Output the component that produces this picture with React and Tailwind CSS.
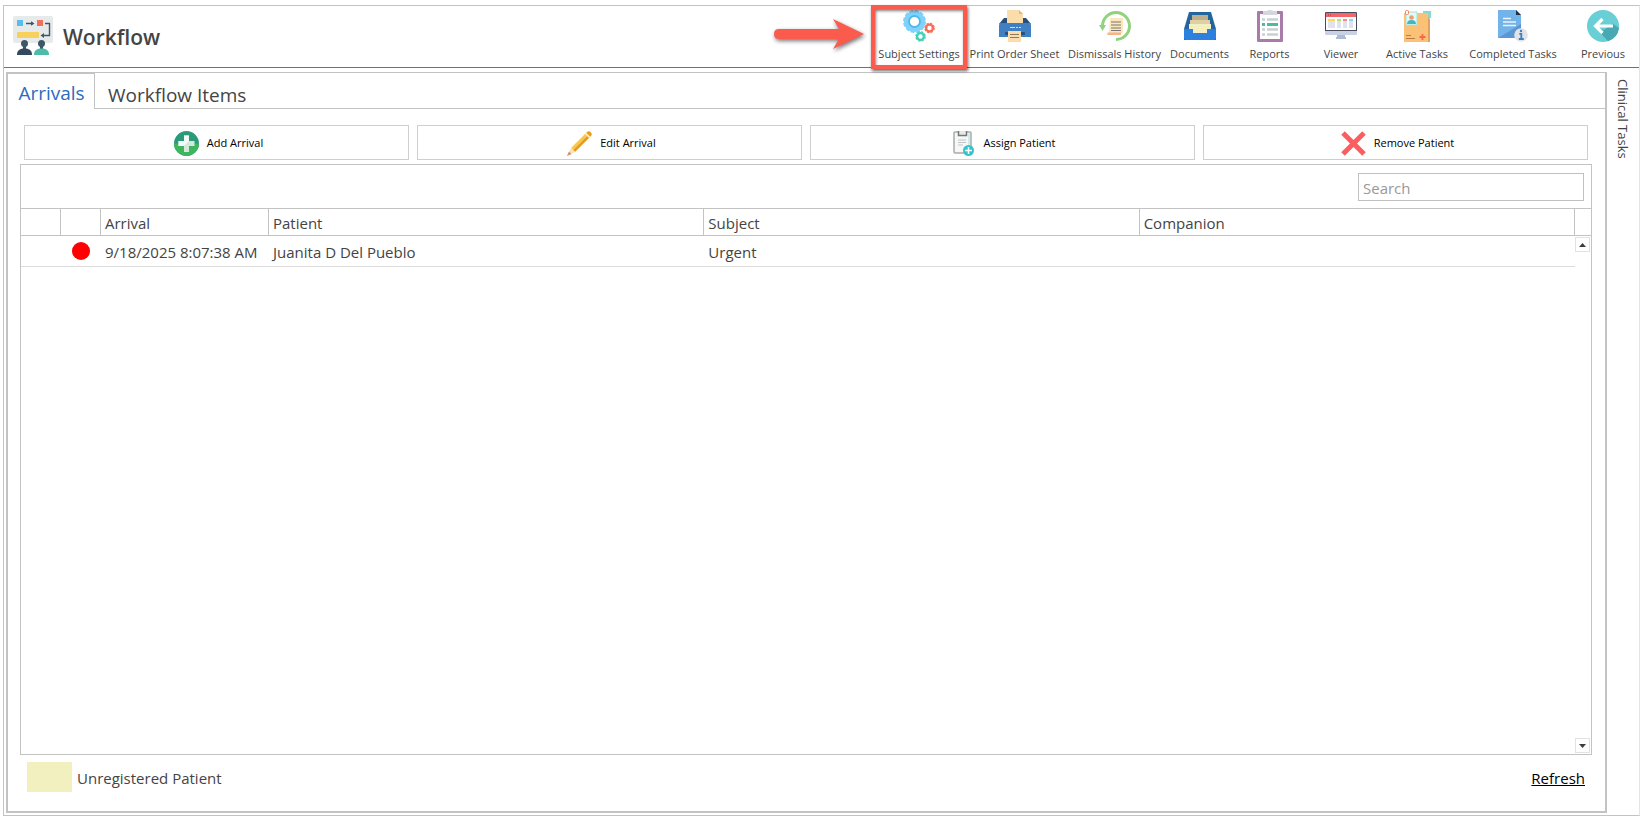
import clsx from 'clsx'

function WorkflowIcon() {
  return (
    <svg width="40" height="40" viewBox="0 0 40 40" aria-hidden="true">
      <rect width="40" height="27" rx="2" fill="#e7eaea" />
      <rect x="4" y="4" width="6" height="6" fill="#56bdee" />
      <rect x="24" y="4" width="6" height="6" fill="#f2705a" />
      <rect x="4" y="16" width="22" height="6" fill="#f8d15c" />
      <path d="M13 7.500h7M32 7.500h4.500v12H31" fill="none" stroke="#3e5768" strokeWidth="1.400" />
      <path d="M18 5.300l3.500 2.200L18 9.700zM31 17l-3.500 2.500L31 22z" fill="#3e5768" />
      <circle cx="11.500" cy="27.500" r="3.500" fill="#3e5768" />
      <path d="M10 29h3v4h-3z" fill="#3e5768" />
      <path d="M4 39c0-4 2-6 6-6.500h3c4 .5 6 2.500 6 6.500z" fill="#34495e" />
      <circle cx="28.500" cy="27.500" r="3.500" fill="#3e5768" />
      <path d="M27 29h3v4h-3z" fill="#3e5768" />
      <path d="M21 39c0-4 2-6 6-6.500h3c4 .5 6 2.500 6 6.500z" fill="#4dbba9" />
    </svg>
  )
}

function GearsIcon() {
  return (
    <svg width="32" height="32" viewBox="0 0 32 32" aria-hidden="true">
      <circle cx="11.500" cy="11.500" r="7.800" fill="none" stroke="#7fd3fb" strokeWidth="5.600" />
      <circle cx="11.500" cy="11.500" r="10.600" fill="none" stroke="#7fd3fb" strokeWidth="1.800" strokeDasharray="3.900 1.650" />
      <circle cx="11.500" cy="11.500" r="5.500" fill="#fff" stroke="#4fb7ec" strokeWidth="1.800" />
      <circle cx="26.500" cy="18" r="3.400" fill="#fff" stroke="#f5705a" strokeWidth="2.400" />
      <circle cx="26.500" cy="18" r="4.700" fill="none" stroke="#f5705a" strokeWidth="1.200" strokeDasharray="2.300 1.390" />
      <circle cx="17.500" cy="26.500" r="3.400" fill="#fff" stroke="#45d0b8" strokeWidth="2.400" />
      <circle cx="17.500" cy="26.500" r="4.700" fill="none" stroke="#45d0b8" strokeWidth="1.200" strokeDasharray="2.300 1.390" />
    </svg>
  )
}

function PrinterIcon() {
  return (
    <svg width="32" height="32" viewBox="0 0 32 32" aria-hidden="true">
      <path d="M5 8h22l5 6H0z" fill="#264f7c" />
      <path d="M8 0h12l4 4v9H8z" fill="#fbdcab" />
      <path d="M20 0v4h4z" fill="#e0b981" />
      <path d="M1 13h30l1 2v12H0V15z" fill="#3f80c3" />
      <path d="M11 17.500h11" stroke="#c9def2" strokeWidth="1.200" strokeDasharray="5 1 2 1" />
      <rect x="6" y="22" width="20" height="3" rx="1" fill="#2b4f78" />
      <rect x="9" y="21" width="13" height="11" fill="#fbdcab" />
      <path d="M11 24.500h9M11 27.500h9" stroke="#8a7a66" strokeWidth="1.200" />
    </svg>
  )
}

function HistoryIcon() {
  return (
    <svg width="32" height="32" viewBox="0 0 32 32" aria-hidden="true">
      <path d="M3.500 16A13.500 13.500 0 1 1 17 29.500" fill="none" stroke="#91d27f" strokeWidth="3" />
      <path d="M0 15h7l-3.500 6z" fill="#91d27f" />
      <path d="M11 8h13v15H10z" fill="#fbe6bd" />
      <path d="M9 22.500h13V25H9c-1 0-1-2 0-2.500z" fill="#f5b48a" />
      <path d="M12 12h10M12 15h10M12 18h10M12 20.500h10" stroke="#7c7770" strokeWidth="1.200" />
    </svg>
  )
}

function DocumentsIcon() {
  return (
    <svg width="32" height="32" viewBox="0 0 32 32" aria-hidden="true">
      <path d="M5 2h22l5 17v11H0V19z" fill="#22659f" />
      <path d="M8 5h16v7H8z" fill="#bfae8b" />
      <path d="M6 10h20v7H6z" fill="#dcd0a4" />
      <path d="M5 14h22v9H5z" fill="#f5efbf" />
      <path d="M0 19h9v4h14v-4h9v9q0 2-2 2H2q-2 0-2-2z" fill="#2c80e0" />
    </svg>
  )
}

function ReportsIcon() {
  return (
    <svg width="32" height="32" viewBox="0 0 32 32" aria-hidden="true">
      <rect x="3" y="1" width="26" height="31" rx="1" fill="#a87ba9" />
      <rect x="6" y="4" width="20" height="25" fill="#fff" />
      <path d="M9 1h4q0-1 3-1t3 1h4v4H9z" fill="#d4d8dc" />
      <path d="M8 9.500h3M13 9.500h11M8 19.500h3M13 19.500h11M8 24.500h3M13 24.500h11" stroke="#c9d0d4" strokeWidth="2.500" />
      <path d="M8 14.500h3M13 14.500h11" stroke="#4dbba2" strokeWidth="2.800" />
    </svg>
  )
}

function ViewerIcon() {
  return (
    <svg width="32" height="32" viewBox="0 0 32 32" aria-hidden="true">
      <rect y="2" width="32" height="22" rx="1" fill="#474b5c" />
      <rect x="1" y="3" width="30" height="4" fill="#f4656a" />
      <rect x="1" y="7" width="30" height="13" fill="#fff" />
      <path d="M3 5h4" stroke="#a93d4c" strokeWidth="1.200" strokeDasharray="1 1" />
      <path d="M3 10h7v8H3zM12 10h4v8h-4zM18 10h4v8h-4zM24 10h4v8h-4z" fill="#dfe3f0" />
      <path d="M3 9h7v2H3z" fill="#fbd75b" />
      <path d="M12 9h4v2h-4z" fill="#b9e06b" />
      <path d="M18 9h4v2h-4z" fill="#f48b8f" />
      <path d="M24 9h4v2h-4z" fill="#84d8f0" />
      <path d="M0 21h32v3q0 1-1 1H1q-1 0-1-1z" fill="#c8d2e4" />
      <path d="M12 25h8v2h1v2H11v-2h1z" fill="#adbbd6" />
    </svg>
  )
}

function ActiveTasksIcon() {
  return (
    <svg width="32" height="32" viewBox="0 0 32 32" aria-hidden="true">
      <path d="M22 1h8v7h-8z" fill="#8bd6cf" />
      <path d="M3 3h24v29H3z" fill="#fac177" />
      <path d="M27 7l2 2v23h-2z" fill="#dfa262" />
      <path d="M5 2h11v13H5z" fill="#e4faf6" stroke="#9fe3da" />
      <circle cx="10.500" cy="7.500" r="2.300" fill="#e2a46e" />
      <path d="M6 14q0-4 4.500-4T15 14z" fill="#43b7c4" />
      <rect x="4.500" y=".5" width="3" height="4" rx="1" fill="#fff" stroke="#f27c62" />
      <path d="M5 25.500h5M5 28.500h9" stroke="#b97c47" strokeWidth="1" />
      <path d="M18.500 27h6M21.500 24v6" stroke="#f36a4d" strokeWidth="1.800" />
    </svg>
  )
}

function CompletedTasksIcon() {
  return (
    <svg width="32" height="32" viewBox="0 0 32 32" aria-hidden="true">
      <path d="M1 0h18l5 5v23H1z" fill="#72b4ea" />
      <path d="M24 14v14H1z" fill="#5b97d5" />
      <path d="M19 0l5 5h-5z" fill="#1f2f45" />
      <path d="M6 8.500h8M6 12h13M6 15.500h13" stroke="#e9f4fd" strokeWidth="1.600" />
      <circle cx="24" cy="25" r="6.800" fill="#e2e3e6" />
      <path d="M22.300 23.800h2v5M21.800 29h5" stroke="#3f7fc0" strokeWidth="1.800" fill="none" />
      <circle cx="24" cy="21" r="1.200" fill="#3f7fc0" />
    </svg>
  )
}

function PreviousIcon() {
  return (
    <svg width="32" height="32" viewBox="0 0 32 32" aria-hidden="true">
      <circle cx="16" cy="16" r="16" fill="#68cfd7" />
      <path d="M8 17l13 14.200A16 16 0 0 0 32 18L25.500 13.500 17 20z" fill="#48a9b3" />
      <path d="M26 16H9M15.500 9L8.500 16l7 7" fill="none" stroke="#fff" strokeWidth="3.200" />
    </svg>
  )
}

function AddIcon() {
  return (
    <svg width="25" height="25" viewBox="0 0 25 25" aria-hidden="true">
      <circle cx="12.500" cy="12.500" r="12.500" fill="#2b9a7b" />
      <path d="M0 12.500h25a12.500 12.500 0 0 1-25 0z" fill="#40b45e" />
      <path d="M10 4.500h5V10h5.500v5H15v6h-5v-6H4.500v-5H10z" fill="#d2eadd" />
      <path d="M10 4.500h5V10l-5 5H4.500v-5H10z" fill="#f3faf6" />
    </svg>
  )
}

function PencilIcon() {
  return (
    <svg width="25" height="25" viewBox="0 0 25 25" aria-hidden="true">
      <path d="M4 17L18.500 2.500 20.500 4.500 6 19z" fill="#fbc945" />
      <path d="M6 19L20.500 4.500l2 2L8 21z" fill="#eb9b13" />
      <path d="M19 2l1.500-1.300q1.500-1.200 3.200.6T24.300 4.500L23 6z" fill="#eb9b13" />
      <path d="M18 3l1.300-1.300 4 4L22 7z" fill="#f8ecc4" />
      <path d="M4 17l4 4-8 4z" fill="#f6e3bf" />
      <path d="M2 20.500L0 25l4.500-2z" fill="#d98a66" />
    </svg>
  )
}

function AssignIcon() {
  return (
    <svg width="22" height="25" viewBox="0 0 22 25" aria-hidden="true">
      <rect x="1" y="1" width="17" height="21" rx="1" fill="#f6f7f7" stroke="#a8abad" strokeWidth="1.500" />
      <path d="M15 2.500h2V14h-2z" fill="#c9eeee" />
      <path d="M5.500 0v4.500h8V0" fill="#e8e8e8" stroke="#747779" strokeWidth="1.500" />
      <path d="M5 9h8M5 11.500h8M5 14h5" stroke="#c2c5c6" />
      <circle cx="15.500" cy="19.500" r="5.500" fill="#36c3c8" />
      <path d="M15.500 16v7M12 19.500h7" stroke="#fff" strokeWidth="1.500" />
    </svg>
  )
}

function RemoveIcon() {
  return (
    <svg width="25" height="25" viewBox="0 0 25 25" aria-hidden="true">
      <path d="M2 2l21 21M23 2L2 23" stroke="#fb5d60" strokeWidth="5" />
    </svg>
  )
}

const TOOLBAR = [
  { label: 'Subject Settings', icon: GearsIcon, width: 'w-[92px]', highlight: true },
  { label: 'Print Order Sheet', icon: PrinterIcon, width: 'w-[99px]' },
  { label: 'Dismissals History', icon: HistoryIcon, width: 'w-[101px]' },
  { label: 'Documents', icon: DocumentsIcon, width: 'w-[69px]' },
  { label: 'Reports', icon: ReportsIcon, width: 'w-[71px]' },
  { label: 'Viewer', icon: ViewerIcon, width: 'w-[72px]' },
  { label: 'Active Tasks', icon: ActiveTasksIcon, width: 'w-[80px]' },
  { label: 'Completed Tasks', icon: CompletedTasksIcon, width: 'w-[112px]' },
  { label: 'Previous', icon: PreviousIcon, width: 'w-[68px]' },
]

const ACTIONS = [
  { label: 'Add Arrival', icon: AddIcon },
  { label: 'Edit Arrival', icon: PencilIcon },
  { label: 'Assign Patient', icon: AssignIcon },
  { label: 'Remove Patient', icon: RemoveIcon },
]

const ARRIVALS = [
  { arrival: '9/18/2025 8:07:38 AM', patient: 'Juanita D Del Pueblo', subject: 'Urgent', companion: '' },
]

function ToolbarButton({ label, icon: Icon, width, highlight }) {
  return (
    <button className={clsx('relative flex flex-col items-center pt-1 whitespace-nowrap', width)}>
      <Icon />
      <span className="mt-1 text-[11px] leading-4">{label}</span>
      {highlight && (
        <>
          <span className="absolute -inset-x-0.5 -top-px h-16 border-4 border-[#fa5b4c] shadow-[1px_2px_3px_rgba(0,0,0,0.6),inset_1px_2px_3px_rgba(0,0,0,0.5)]" />
          <svg
            className="absolute right-full top-3 mr-1 overflow-visible drop-shadow-[1px_2px_2px_rgba(0,0,0,0.55)]"
            width="96"
            height="32"
            viewBox="0 0 96 32"
            aria-hidden="true"
          >
            <path d="M6 11h60L60 1l31 15-31 15 6-10H6q-5 0-5-5t5-5z" fill="#fa5b4c" />
          </svg>
        </>
      )}
    </button>
  )
}

function Header() {
  return (
    <header className="flex h-[62px] justify-between border-b border-[#4a7ab0] pr-0.5">
      <div className="flex items-start pl-[9px] pt-2.5">
        <WorkflowIcon />
        <h1 className="ml-2.5 text-[21px] font-semibold leading-[42px]">Workflow</h1>
      </div>
      <nav className="flex" aria-label="Workflow tools">
        {TOOLBAR.map((item) => (
          <ToolbarButton key={item.label} {...item} />
        ))}
      </nav>
    </header>
  )
}

function ArrivalsTable() {
  const th = 'h-[27px] border-b border-r border-[#c3c3c3] px-1 pt-0.5 text-left font-normal leading-5'
  const td = 'h-[31px] border-b border-[#dcdcdc] px-1 pt-0.5 leading-5'
  return (
    <table className="w-full table-fixed border-separate border-spacing-0">
      <colgroup>
        <col className="w-10" />
        <col className="w-10" />
        <col className="w-[168px]" />
        <col />
        <col />
        <col />
      </colgroup>
      <thead>
        <tr>
          <th className={th} aria-label="Selected" />
          <th className={th} aria-label="Priority" />
          <th className={th}>Arrival</th>
          <th className={th}>Patient</th>
          <th className={th}>Subject</th>
          <th className={th}>Companion</th>
        </tr>
      </thead>
      <tbody>
        {ARRIVALS.map((row) => (
          <tr key={row.arrival}>
            <td className={td} />
            <td className="border-b border-[#dcdcdc]">
              <div className="mx-auto size-[18px] rounded-full bg-[#ff0000]" />
            </td>
            <td className={clsx(td, 'whitespace-nowrap')}>{row.arrival}</td>
            <td className={td}>{row.patient}</td>
            <td className={td}>{row.subject}</td>
            <td className={td}>{row.companion}</td>
          </tr>
        ))}
      </tbody>
    </table>
  )
}

function ScrollButton({ label, path }) {
  return (
    <button aria-label={label} className="flex size-[15px] items-center justify-center border border-[#e2e2e2]">
      <svg width="7" height="4" viewBox="0 0 7 4" aria-hidden="true">
        <path d={path} fill="#3c3c3c" />
      </svg>
    </button>
  )
}

export default function App() {
  return (
    <div className="flex min-h-screen bg-white px-[3px] pt-[5px] pb-1 font-['Open_Sans','Noto_Sans',sans-serif] text-[15px] text-[#444]">
      <div className="flex min-w-0 flex-1 flex-col border border-[#c3c3c3] border-r-[#e4e4e4]">
        <Header />

        <div className="flex flex-1 pt-1 pb-0.5 pl-0.5">
          <main className="flex min-w-0 flex-1 flex-col border-2 border-t border-[#c3c3c3]">
            <div className="flex h-9" role="tablist">
              <button
                role="tab"
                aria-selected="true"
                className="w-[87px] border-t border-r border-[#c3c3c3] pt-0.5 pl-px text-[19px] leading-8 text-[#2b6cc0]"
              >
                Arrivals
              </button>
              <div className="flex flex-1 items-end border-b border-[#c3c3c3]">
                <button role="tab" aria-selected="false" className="px-[13px] text-[19px] leading-[26px]">
                  Workflow Items
                </button>
              </div>
            </div>

            <div className="flex flex-1 flex-col pt-4 pr-[13px] pl-3">
              <div className="flex gap-2 px-1">
                {ACTIONS.map(({ label, icon: Icon }) => (
                  <button
                    key={label}
                    className="flex h-[35px] flex-1 items-center justify-center gap-2 border border-[#cfcfcf] pt-0.5 pl-1 text-[11px] text-black"
                  >
                    <Icon />
                    {label}
                  </button>
                ))}
              </div>

              <section className="mt-1 flex flex-1 flex-col border border-[#c3c3c3]">
                <div className="flex justify-end border-b border-[#c3c3c3] pt-2 pr-[7px] pb-[7px]">
                  <input
                    type="search"
                    aria-label="Search"
                    placeholder="Search"
                    className="h-7 w-[226px] border border-[#c0c0c0] px-1 pt-0.5 placeholder:text-[#999]"
                  />
                </div>
                <div className="flex flex-1">
                  <div className="min-w-0 flex-1">
                    <ArrivalsTable />
                  </div>
                  <div className="flex w-4 flex-col pb-px">
                    <div className="mb-px h-[27px] border-b border-[#c3c3c3]" />
                    <ScrollButton label="Scroll up" path="M3.500 0L7 4H0z" />
                    <div className="flex-1" />
                    <ScrollButton label="Scroll down" path="M0 0h7L3.500 4z" />
                  </div>
                </div>
              </section>

              <footer className="flex items-center justify-between px-[7px] pt-[7px] pb-[19px]">
                <div className="flex items-center gap-[5px]">
                  <div className="h-[30px] w-[45px] bg-[#f2f0be]" />
                  <span className="pt-0.5">Unregistered Patient</span>
                </div>
                <a href="#refresh" className="pt-0.5 text-black underline">
                  Refresh
                </a>
              </footer>
            </div>
          </main>

          <aside className="flex w-8 justify-center pt-[7px]">
            <button className="self-start text-[13px] leading-4 [writing-mode:vertical-rl]">Clinical Tasks</button>
          </aside>
        </div>
      </div>
    </div>
  )
}
